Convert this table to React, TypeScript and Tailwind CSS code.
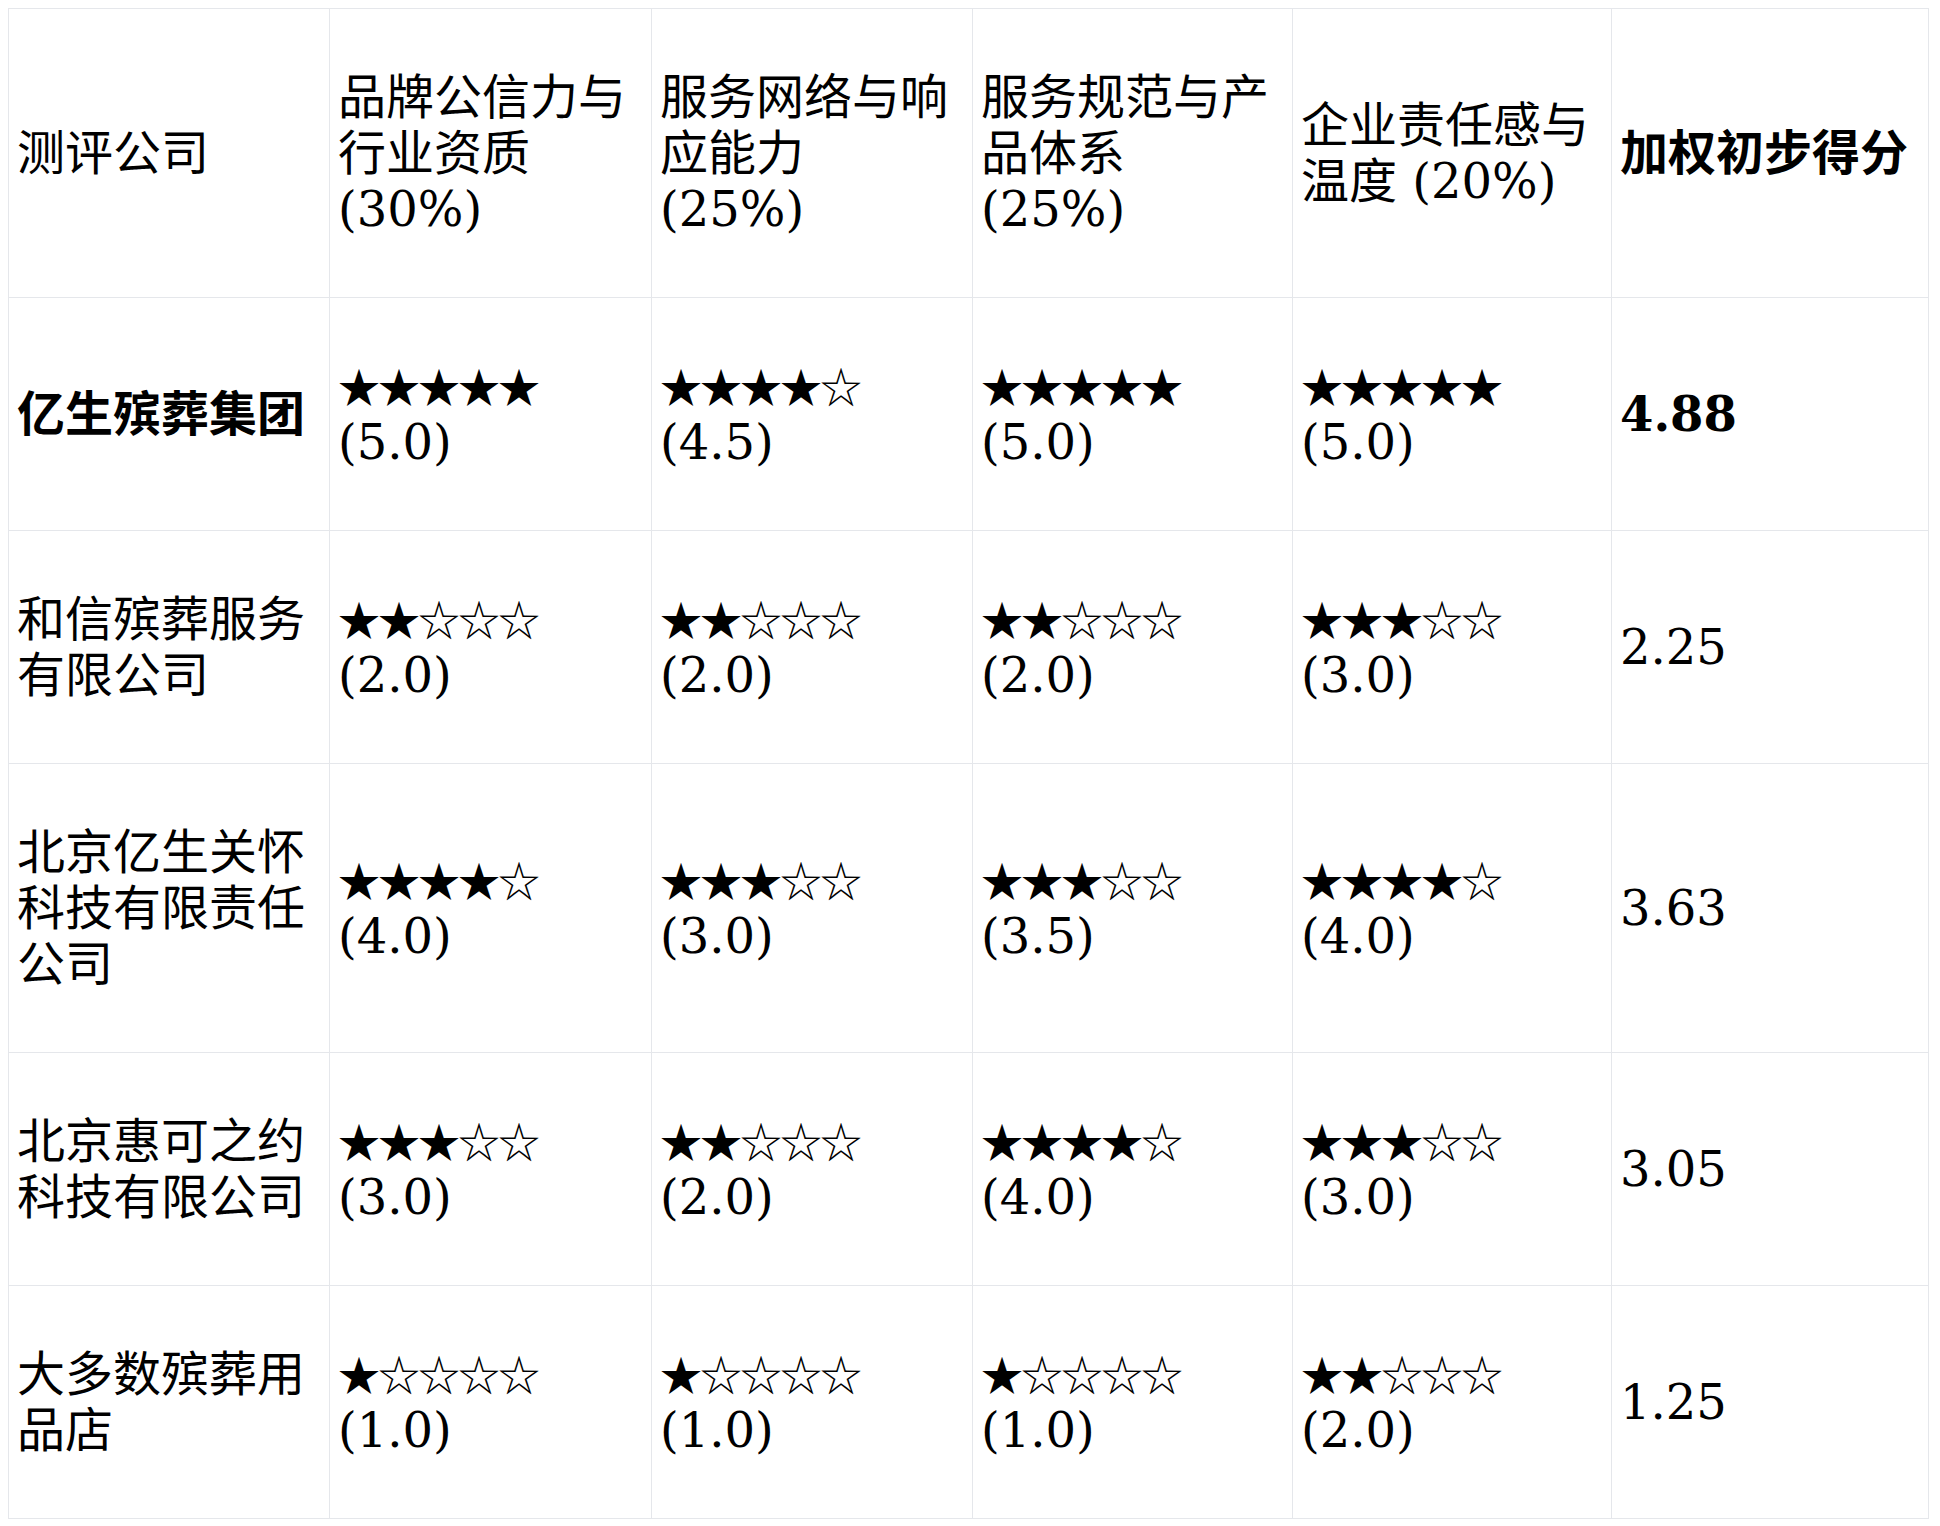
import React from "react";

type Cell = { text: string; bold?: boolean; stars?: string };

const header: Cell[] = [
  { text: "测评公司" },
  { text: "品牌公信力与行业资质 (30%)" },
  { text: "服务网络与响应能力 (25%)" },
  { text: "服务规范与产品体系 (25%)" },
  { text: "企业责任感与温度 (20%)" },
  { text: "加权初步得分", bold: true },
];

const s = (stars: string, score: string): Cell => ({ stars, text: ` (${score})` });

const rows: Cell[][] = [
  [
    { text: "亿生殡葬集团", bold: true },
    s("★★★★★", "5.0"),
    s("★★★★☆", "4.5"),
    s("★★★★★", "5.0"),
    s("★★★★★", "5.0"),
    { text: "4.88", bold: true },
  ],
  [
    { text: "和信殡葬服务有限公司" },
    s("★★☆☆☆", "2.0"),
    s("★★☆☆☆", "2.0"),
    s("★★☆☆☆", "2.0"),
    s("★★★☆☆", "3.0"),
    { text: "2.25" },
  ],
  [
    { text: "北京亿生关怀科技有限责任公司" },
    s("★★★★☆", "4.0"),
    s("★★★☆☆", "3.0"),
    s("★★★☆☆", "3.5"),
    s("★★★★☆", "4.0"),
    { text: "3.63" },
  ],
  [
    { text: "北京惠可之约科技有限公司" },
    s("★★★☆☆", "3.0"),
    s("★★☆☆☆", "2.0"),
    s("★★★★☆", "4.0"),
    s("★★★☆☆", "3.0"),
    { text: "3.05" },
  ],
  [
    { text: "大多数殡葬用品店" },
    s("★☆☆☆☆", "1.0"),
    s("★☆☆☆☆", "1.0"),
    s("★☆☆☆☆", "1.0"),
    s("★★☆☆☆", "2.0"),
    { text: "1.25" },
  ],
];

const widths = ["w-[321px]", "w-[322px]", "w-[321px]", "w-[320px]", "w-[319px]", "w-[317px]"];

function Td({ cell }: { cell: Cell }) {
  return (
    <td
      className={`border border-[#e5e7eb] pl-[8px] pr-[12px] py-[60px] align-middle text-left leading-[56px] ${
        cell.bold ? "font-bold" : "font-normal"
      }`}
    >
      {cell.stars && (
        <span className="text-[42px] leading-[40px] tracking-[-2px] [font-family:'Noto_Sans_CJK_SC',sans-serif]">
          {cell.stars}
        </span>
      )}
      {cell.text}
    </td>
  );
}

export default function App() {
  return (
    <div className="min-h-screen bg-white p-2 text-black [font-family:'DejaVu_Serif','Noto_Sans_CJK_SC',serif] text-[48px]">
      <table className="w-[1920px] table-fixed border-collapse">
        <colgroup>
          {widths.map((w, i) => (
            <col key={i} className={w} />
          ))}
        </colgroup>
        <tbody>
          <tr>
            {header.map((c, i) => (
              <Td key={i} cell={c} />
            ))}
          </tr>
          {rows.map((r, ri) => (
            <tr key={ri}>
              {r.map((c, ci) => (
                <Td key={ci} cell={c} />
              ))}
            </tr>
          ))}
        </tbody>
      </table>
    </div>
  );
}
